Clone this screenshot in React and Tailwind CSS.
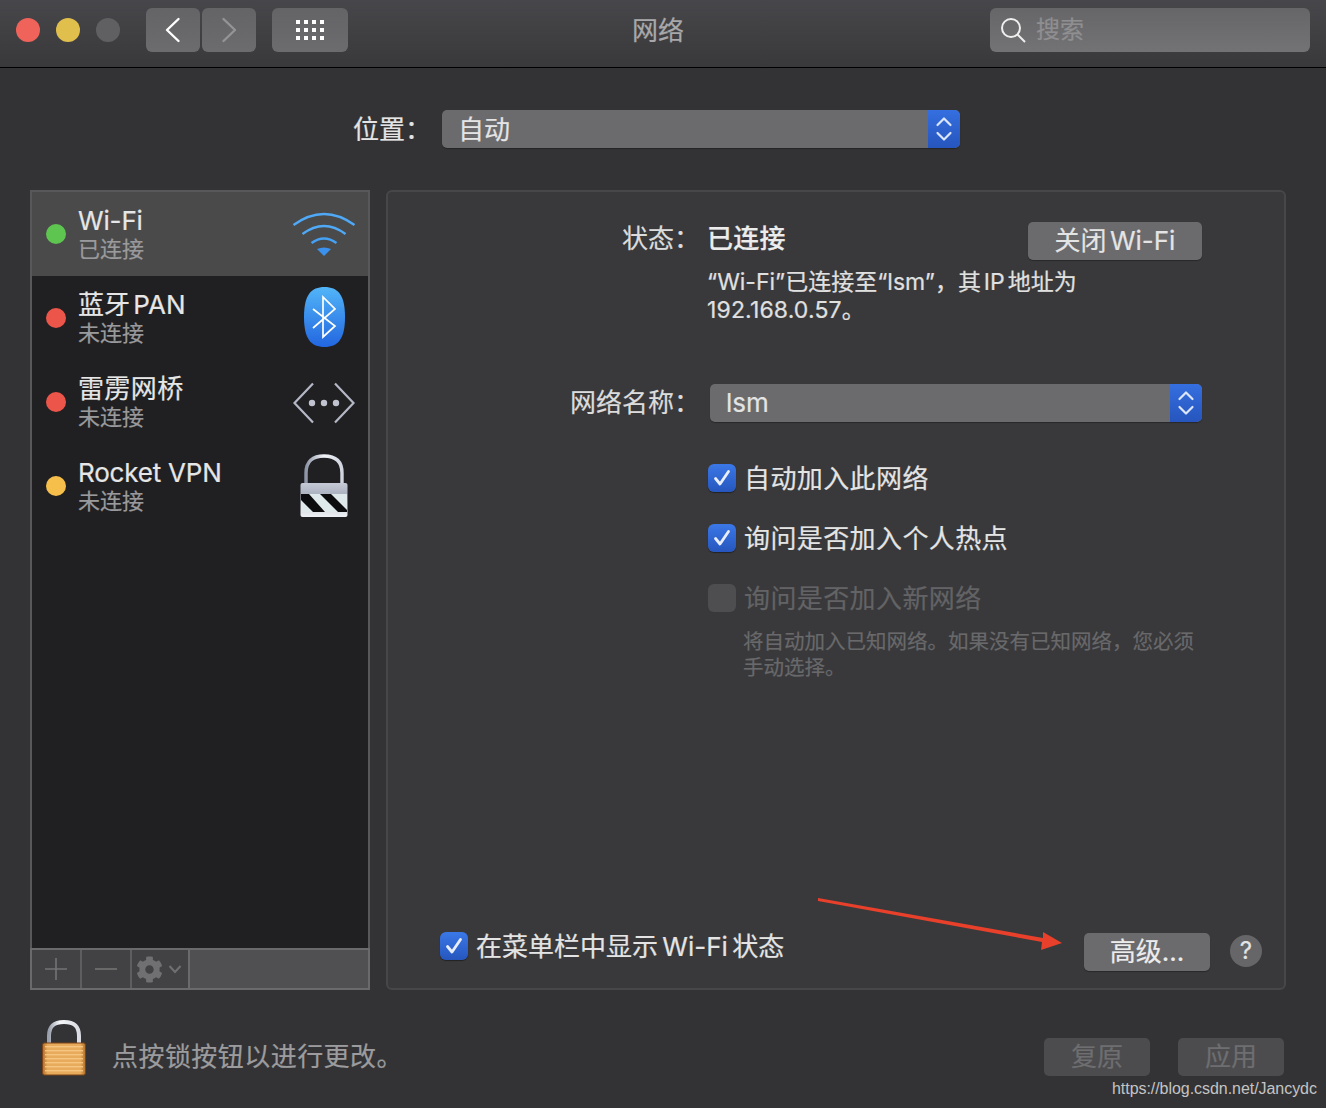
import React from "react";
import { FaCog } from "react-icons/fa";

const Check = () => (
  <span className="flex h-[28px] w-[28px] shrink-0 items-center justify-center rounded-[6px] bg-gradient-to-b from-[#3b78e7] to-[#2656bd] shadow-[0_1px_1px_rgba(0,0,0,0.4)]">
    <svg width="20" height="20" viewBox="0 0 20 20" fill="none">
      <path d="M3.5 10.5 L8 16 L16.5 3.5" stroke="#e8eefc" strokeWidth="2.8" strokeLinecap="round" strokeLinejoin="round" />
    </svg>
  </span>
);

const Stepper = () => (
  <span className="flex h-full w-[32px] items-center justify-center rounded-r-[5px] bg-gradient-to-b from-[#356fe0] to-[#2655bd]">
    <svg width="18" height="30" viewBox="0 0 18 30" fill="none">
      <path d="M2.5 11 L9 4.5 L15.5 11 M2.5 19 L9 25.5 L15.5 19" stroke="#dbe5fb" strokeWidth="2.2" strokeLinecap="round" strokeLinejoin="round" />
    </svg>
  </span>
);

const WifiIcon = () => (
  <svg width="64" height="48" viewBox="0 0 64 48" fill="none">
    <path d="M1.5 15 Q32 -7 62.5 15" stroke="#4fa9f6" strokeWidth="2.4" />
    <path d="M10.5 24 Q32 8 53.5 24" stroke="#4fa9f6" strokeWidth="2.4" />
    <path d="M19.5 33 Q32 24 44.5 33" stroke="#45a1f3" strokeWidth="2.4" />
    <path d="M25 39 Q32 36 39 39 L32 46 Z" fill="#3a92ee" />
  </svg>
);

const BluetoothIcon = () => (
  <svg className="-translate-y-[1px]" width="41" height="60" viewBox="0 0 41 60" fill="none">
    <defs>
      <linearGradient id="bt" x1="0" y1="0" x2="0" y2="1">
        <stop offset="0" stopColor="#52b5f8" />
        <stop offset="1" stopColor="#2266e0" />
      </linearGradient>
    </defs>
    <path d="M20.5 0 C34 0 41 8 41 30 C41 52 34 60 20.5 60 C7 60 0 52 0 30 C0 8 7 0 20.5 0 Z" fill="url(#bt)" />
    <path d="M9 22 L31 39 L19 50 L19 10 L31 22 L9 41" stroke="#ffffff" strokeWidth="1.7" strokeLinejoin="miter" />
  </svg>
);

const BridgeIcon = () => (
  <svg className="translate-y-[1px]" width="62" height="42" viewBox="0 0 62 42" fill="none">
    <path d="M20 1.5 L1.5 21 L20 40.5 M42 1.5 L60.5 21 L42 40.5" stroke="#b4b8c6" strokeWidth="2.2" />
    <circle cx="19" cy="21" r="3.2" fill="#c0c3cf" />
    <circle cx="31" cy="21" r="3.2" fill="#c0c3cf" />
    <circle cx="43" cy="21" r="3.2" fill="#c0c3cf" />
  </svg>
);

const VpnLock = () => (
  <svg width="48" height="64" viewBox="0 0 48 64" fill="none">
    <defs>
      <linearGradient id="sh" x1="0" y1="0" x2="1" y2="0">
        <stop offset="0" stopColor="#8e95a6" />
        <stop offset="0.5" stopColor="#f2f4f8" />
        <stop offset="1" stopColor="#cfd4df" />
      </linearGradient>
      <linearGradient id="vb" x1="0" y1="0" x2="0" y2="1">
        <stop offset="0" stopColor="#c6cad6" />
        <stop offset="0.3" stopColor="#aeb3c2" />
        <stop offset="1" stopColor="#eef1f4" />
      </linearGradient>
    </defs>
    <path d="M6 30 L6 19 C6 7 13 2 24 2 C35 2 42 7 42 19 L42 30" stroke="url(#sh)" strokeWidth="3.4" />
    <rect x="0.5" y="29" width="47" height="34" rx="2" fill="url(#vb)" />
    <rect x="1" y="40" width="46" height="18" fill="#dfe8ea" />
    <path d="M1 40 H9 L25 58 H13 L1 46 Z M20 40 H31 L47 56 V58 H38 Z" fill="#0c0c0e" />
  </svg>
);

const GoldLock = () => {
  const bands = [26, 30, 34, 38, 42, 46, 50];
  return (
    <svg width="44" height="56" viewBox="0 0 44 56" fill="none">
      <defs>
        <linearGradient id="gs" x1="0" y1="0" x2="1" y2="0">
          <stop offset="0" stopColor="#9aa0ad" />
          <stop offset="0.35" stopColor="#f5f6f8" />
          <stop offset="1" stopColor="#d9dce3" />
        </linearGradient>
        <linearGradient id="gb" x1="0" y1="0" x2="1" y2="0">
          <stop offset="0" stopColor="#b06e2a" />
          <stop offset="0.12" stopColor="#e8ab5c" />
          <stop offset="0.88" stopColor="#e8ab5c" />
          <stop offset="1" stopColor="#b06e2a" />
        </linearGradient>
      </defs>
      <path d="M7 24 L7 16 C7 6 12 2 22 2 C32 2 37 6 37 16 L37 24" stroke="url(#gs)" strokeWidth="4" />
      <rect x="0.5" y="23" width="43" height="32" rx="2" fill="url(#gb)" stroke="#7c4416" strokeWidth="1" />
      {bands.map((y) => (
        <rect key={y} x="3" y={y} width="38" height="1.4" fill="#f4c681" />
      ))}
    </svg>
  );
};

const rows = [
  { name: "Wi-Fi", status: "已连接", dot: "bg-[#5ec550]", icon: <WifiIcon />, active: true, nameClass: "tracking-[-0.15px]" },
  { name: "蓝牙 PAN", status: "未连接", dot: "bg-[#ec5549]", icon: <BluetoothIcon />, nameClass: "[word-spacing:-4px]" },
  { name: "雷雳网桥", status: "未连接", dot: "bg-[#ec5549]", icon: <BridgeIcon />, nameClass: "tracking-[0.4px]" },
  { name: "Rocket VPN", status: "未连接", dot: "bg-[#f6bf4c]", icon: <VpnLock />, nameClass: "tracking-[-0.2px]" },
];

export default function App() {
  return (
    <div className="relative flex h-[1108px] w-[1326px] flex-col overflow-hidden bg-[#333335] text-[26px] text-[#e4e4e4] [-webkit-text-stroke:0.2px] [font-family:Inter,'Noto_Sans_CJK_SC',sans-serif]">
      {/* Toolbar */}
      <header className="flex h-[68px] shrink-0 items-start border-b border-black bg-gradient-to-b from-[#47474b] to-[#39393b] pl-[16px] pr-[16px] pt-[8px]">
        <div className="flex h-[44px] items-center">
          <div className="flex gap-[16px]">
            <span className="h-[24px] w-[24px] rounded-full bg-[#f0635a]" />
            <span className="h-[24px] w-[24px] rounded-full bg-[#e0bf4c]" />
            <span className="h-[24px] w-[24px] rounded-full bg-[#606062]" />
          </div>
          <div className="ml-[26px] flex gap-[2px]">
            <span className="flex h-[44px] w-[54px] items-center justify-center rounded-[6px] bg-gradient-to-b from-[#646466] to-[#6c6c6e]">
              <svg width="18" height="26" viewBox="0 0 18 26" fill="none"><path d="M14.5 2 L3 13 L14.5 24" stroke="#fff" strokeWidth="2.4" strokeLinecap="round" strokeLinejoin="round" /></svg>
            </span>
            <span className="flex h-[44px] w-[54px] items-center justify-center rounded-[6px] bg-gradient-to-b from-[#646466] to-[#6c6c6e]">
              <svg width="18" height="26" viewBox="0 0 18 26" fill="none"><path d="M3.5 2 L15 13 L3.5 24" stroke="#949496" strokeWidth="2.4" strokeLinecap="round" strokeLinejoin="round" /></svg>
            </span>
          </div>
          <span className="ml-[16px] flex h-[44px] w-[76px] items-center justify-center rounded-[6px] bg-gradient-to-b from-[#646466] to-[#6c6c6e]">
            <span className="grid grid-cols-4 gap-[4px]">
              {Array.from({ length: 12 }).map((_, i) => (
                <span key={i} className="h-[4px] w-[4px] bg-white" />
              ))}
            </span>
          </span>
        </div>
        <div className="flex h-[44px] flex-1 items-center justify-center pr-[22px] text-[#a8a8aa]">网络</div>
        <div className="flex h-[44px] w-[320px] items-center rounded-[6px] bg-gradient-to-b from-[#666668] to-[#737375] pl-[10px]">
          <svg width="26" height="26" viewBox="0 0 26 26" fill="none">
            <circle cx="11" cy="11" r="9" stroke="#eeeeee" strokeWidth="2" />
            <path d="M17.5 17.5 L25 25" stroke="#eeeeee" strokeWidth="2" />
          </svg>
          <span className="ml-[10px] text-[24px] leading-none text-[#8f8f91]">搜索</span>
        </div>
      </header>

      {/* Location */}
      <div className="ml-[353px] mt-[42px] flex h-[38px] shrink-0 items-center">
        <span className="w-[89px] whitespace-nowrap">位置：</span>
        <div className="flex h-[38px] w-[518px] items-center justify-between overflow-hidden rounded-[5px] bg-[#6b6b6d] pl-[16px] shadow-[0_1px_1px_rgba(0,0,0,0.3)]">
          <span>自动</span>
          <Stepper />
        </div>
      </div>

      {/* Panels */}
      <div className="ml-[30px] mt-[42px] flex h-[800px] w-[1256px] shrink-0 gap-[16px]">
        <aside className="flex h-full w-[340px] flex-col border-2 border-[#58585a] bg-[#202022]">
          <div className="flex-1">
            {rows.map((r) => (
              <div key={r.name} className={`flex h-[84px] items-center pl-[14px] ${r.active ? "bg-[#4a4a4b]" : ""}`}>
                <span className={`h-[20px] w-[20px] shrink-0 rounded-full ${r.dot}`} />
                <div className="ml-[12px] flex flex-1 flex-col">
                  <span className={`translate-y-[1px] text-[26px] leading-[30px] text-[#e6e6e6] ${r.nameClass}`}>{r.name}</span>
                  <span className="text-[22px] leading-[28px] text-[#9a9a9c]">{r.status}</span>
                </div>
                <div className="mr-[12px] flex w-[64px] justify-center">{r.icon}</div>
              </div>
            ))}
          </div>
          <div className="-mx-[2px] -mb-[2px] flex h-[42px] shrink-0 border-2 border-[#6a6a6c] bg-[#505052]">
            <span className="flex w-[50px] items-center justify-center border-r-2 border-[#5e5e60] bg-[#424244]">
              <svg width="22" height="22" viewBox="0 0 22 22"><path d="M11 0 V22 M0 11 H22" stroke="#737375" strokeWidth="1.6" /></svg>
            </span>
            <span className="flex w-[50px] items-center justify-center border-r-2 border-[#5e5e60] bg-[#424244]">
              <svg width="22" height="22" viewBox="0 0 22 22"><path d="M0 11 H22" stroke="#737375" strokeWidth="1.6" /></svg>
            </span>
            <span className="flex w-[58px] items-center justify-center gap-[5px] border-r-2 border-[#6a6a6c] bg-[#424244] pr-[3px]">
              <FaCog size={27} color="#707072" />
              <svg width="14" height="10" viewBox="0 0 14 10" fill="none"><path d="M1.5 2 L7 8 L12.5 2" stroke="#707072" strokeWidth="2" /></svg>
            </span>
            <span className="flex-1" />
          </div>
        </aside>

        <section className="flex h-full flex-1 flex-col rounded-[6px] border-2 border-[#474749] bg-[#39393b] pb-[17px] pr-[22px] pt-[30px]">
          <div className="grid grid-cols-[312px_1fr] items-start gap-x-[7px]">
            <span className="flex h-[38px] items-center justify-end whitespace-nowrap pb-[6px] text-[#dcdcdc]">状态：</span>
            <div className="flex h-[38px] items-center justify-between pr-[60px]">
              <span className="pb-[6px] font-medium tracking-[0.3px] text-[#ececec]">已连接</span>
              <span className="flex h-[38px] w-[174px] items-center justify-center rounded-[5px] bg-[#6b6b6d] pb-[2px] shadow-[0_1px_1px_rgba(0,0,0,0.3)] [word-spacing:-4px]">关闭 Wi-Fi</span>
            </div>
            <span />
            <p className="mt-[8px] text-[23px] leading-[28px] text-[#e0e0e0] [word-spacing:-3.5px]">
              “Wi-Fi”已连接至“lsm”，其 IP 地址为
              <br />
              <span className="tracking-[0.15px]">192.168.0.57。</span>
            </p>
            <span className="mt-[60px] flex h-[38px] items-center justify-end whitespace-nowrap pb-[2px] text-[#dcdcdc]">网络名称：</span>
            <div className="mt-[60px] pl-[3px]">
              <div className="flex h-[38px] w-[492px] items-center justify-between overflow-hidden rounded-[5px] bg-[#6b6b6d] pl-[16px] shadow-[0_1px_1px_rgba(0,0,0,0.3)]">
                <span className="-translate-y-[1px]">lsm</span>
                <Stepper />
              </div>
            </div>
          </div>

          <div className="ml-[320px] mt-[42px] flex flex-col gap-[32px] tracking-[0.4px]">
            <label className="flex h-[28px] items-center gap-[8px] whitespace-nowrap"><Check /><span className="pt-[1px]">自动加入此网络</span></label>
            <label className="flex h-[28px] items-center gap-[8px] whitespace-nowrap"><Check /><span className="pt-[1px]">询问是否加入个人热点</span></label>
            <label className="flex h-[28px] items-center gap-[8px] whitespace-nowrap text-[#636365]">
              <span className="h-[28px] w-[28px] shrink-0 rounded-[6px] bg-[#4e4e50]" /><span className="pt-[1px]">询问是否加入新网络</span>
            </label>
          </div>
          <p className="ml-[355px] mt-[17px] text-[20.5px] leading-[26px] text-[#69696b]">
            将自动加入已知网络。如果没有已知网络，您必须
            <br />
            手动选择。
          </p>

          <div className="mt-auto flex items-start pl-[52px]">
            <label className="-mt-[1px] flex h-[28px] items-center gap-[8px] whitespace-nowrap [word-spacing:-3px]"><Check />在菜单栏中显示 Wi-Fi 状态</label>
            <span className="ml-auto flex h-[38px] w-[126px] items-center justify-center rounded-[5px] bg-[#6b6b6d] pb-[2px] text-[#ececec] shadow-[0_1px_1px_rgba(0,0,0,0.3)]">高级...</span>
            <span className="ml-[20px] mt-[2px] flex h-[32px] w-[32px] items-center justify-center rounded-full bg-[#666668] text-[24px] leading-none text-[#e4e4e4]">?</span>
          </div>
        </section>
      </div>

      {/* Footer */}
      <footer className="ml-[42px] mt-[30px] flex h-[56px] w-[1242px] shrink-0 items-start">
        <GoldLock />
        <span className="ml-[26px] mt-[17px] tracking-[0.45px] text-[#9c9c9e]">点按锁按钮以进行更改。</span>
        <div className="ml-auto mt-[18px] flex gap-[28px]">
          <span className="flex h-[38px] w-[106px] items-center justify-center rounded-[5px] bg-[#4c4c4e] pb-[2px] text-[#6e6e70]">复原</span>
          <span className="flex h-[38px] w-[106px] items-center justify-center rounded-[5px] bg-[#4c4c4e] pb-[2px] text-[#6e6e70]">应用</span>
        </div>
      </footer>

      {/* Annotation arrow */}
      <svg className="absolute left-[815px] top-[895px]" width="250" height="60" viewBox="0 0 250 60" fill="none">
        <path d="M3 3 L228 43 L228 37 L247 48 L226 55 L227 47 L3 6 Z" fill="#e8402a" />
      </svg>

      {/* Watermark */}
      <span className="absolute left-[1112px] top-[1080px] text-[16px] leading-[18px] tracking-[-0.05px] text-[#c4c4c4] [-webkit-text-stroke:0] [font-family:'Liberation_Sans',sans-serif]">https://blog.csdn.net/Jancydc</span>
    </div>
  );
}
